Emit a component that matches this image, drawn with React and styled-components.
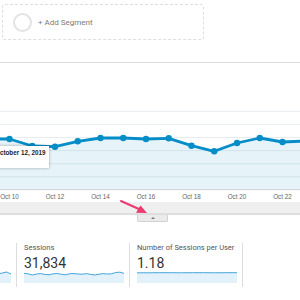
import styled, { createGlobalStyle } from "styled-components";

const GlobalStyle = createGlobalStyle`
  html, body {
    margin: 0;
    padding: 0;
    background: #ffffff;
  }
  body {
    width: 300px;
    height: 300px;
    overflow: hidden;
    font-family: Roboto, "Liberation Sans", Arial, sans-serif;
  }
`;

const Page = styled.div`
  width: 300px;
  height: 300px;
  overflow: hidden;
`;

const Header = styled.div`
  height: 63px;
  padding: 4px 0 0 2px;
  box-sizing: border-box;
  border-bottom: 1px solid #dcdcdc;
`;

const SegmentBox = styled.div`
  width: 202px;
  height: 36px;
  box-sizing: border-box;
  border: 1px dashed #dedede;
  border-radius: 3px;
  display: flex;
  align-items: center;
  padding-left: 10px;
  gap: 6px;
`;

const SegmentCircle = styled.div`
  width: 19px;
  height: 19px;
  box-sizing: border-box;
  border: 2px solid #e3e3e3;
  border-radius: 50%;
`;

const SegmentText = styled.span`
  font-size: 8px;
  color: #7a7a7a;
`;

const ChartWrap = styled.div`
  position: relative;
  height: 139px;
`;

const Tooltip = styled.div`
  position: absolute;
  left: -10px;
  top: 83px;
  width: 59px;
  height: 22px;
  box-sizing: border-box;
  padding: 3px 0 0 5px;
  background: #ffffff;
  box-shadow: 0 0 3px rgba(0, 0, 0, 0.3);
  font-family: "Liberation Sans", Arial, sans-serif;
  font-weight: bold;
  font-size: 6.3px;
  line-height: 8px;
  color: #222;
  white-space: nowrap;
`;

const Scroller = styled.div`
  position: relative;
`;

const Band = styled.div`
  height: 11px;
  background: #efefef;
  border-bottom: 2px solid #dedede;
`;

const Handle = styled.div`
  margin-left: 137px;
  width: 29px;
  height: 6px;
  background: #ebebeb;
  border: 1px solid #d2d2d2;
  border-top: none;
  border-radius: 0 0 2px 2px;
  display: flex;
  align-items: center;
  justify-content: center;
`;

const Caret = styled.div`
  width: 0;
  height: 0;
  border-left: 2px solid transparent;
  border-right: 2px solid transparent;
  border-bottom: 2px solid #777;
`;

const Arrow = styled.svg`
  position: absolute;
  left: 118px;
  top: -3px;
`;

const MetricsRow = styled.div`
  display: flex;
  margin-top: 21px;
  margin-left: -96px;
`;

const Metric = styled.div`
  width: 113px;
  height: 44px;
  flex-shrink: 0;
  box-sizing: border-box;
  border-right: 1px solid #dddddd;
  padding: 0 5px 0 7px;
`;

const MetricLabel = styled.div`
  font-size: 7.5px;
  line-height: 10px;
  height: 10px;
  color: #555;
  white-space: nowrap;
`;

const MetricValue = styled.div`
  margin-top: 2px;
  font-size: 14px;
  line-height: 16px;
  color: #333;
  height: 16px;
`;

const Spark = styled.svg`
  display: block;
`;

const days = [
  [-1, 140], [0, 140], [1, 147], [2, 147.7], [3, 142.3], [4, 139], [5, 139],
  [6, 140], [7, 139.3], [8, 146.7], [9, 152.3], [10, 144], [11, 139],
  [12, 143], [13, 142],
];
const dx = (i) => 9.5 + 22.75 * i;
const pts = days.map(([i, y]) => [dx(i), y]);
const linePath = pts.map(([x, y], k) => `${k ? "L" : "M"}${x} ${y}`).join(" ");
const areaPath = `${linePath} L${pts[pts.length - 1][0]} 190.5 L${pts[0][0]} 190.5 Z`;
const grid = [112.3, 125.4, 138.5, 151.6, 164.7, 177.8];
const labels = ["Oct 10", "Oct 12", "Oct 14", "Oct 16", "Oct 18", "Oct 20", "Oct 22"];

function Sparkline({ values }) {
  const step = 100 / (values.length - 1);
  const line = values.map((v, k) => `${k ? "L" : "M"}${k * step} ${v}`).join(" ");
  return (
    <Spark width="100" height="12" viewBox="0 0 100 12">
      <path d={`${line} L100 12 L0 12 Z`} fill="#e3f1fa" />
      <path d={line} fill="none" stroke="#45a5dc" strokeWidth="1" />
    </Spark>
  );
}

// first card sits mostly off the left edge, only its sparkline tail shows
const metrics = [
  { id: "users", spark: [3, 3, 2.5, 3, 3.5, 3, 2.5, 3, 3.5, 3, 3, 2.5, 3, 3.5, 3, 3, 3, 2.5, 3, 3, 3, 2, 1, 3] },
  { id: "sessions", label: "Sessions", value: "31,834", spark: [2.3, 2.8, 4, 3, 2.6, 3.4, 3.8, 2.8, 2.5, 3.3, 3.8, 2.7, 2.6, 3, 3.2, 2.6, 3.4, 4, 3.2, 2.6, 3, 2.8, 1.5, 1.2, 2.3] },
  { id: "spu", label: "Number of Sessions per User", value: "1.18", spark: [1.8, 1.8, 1.7, 1.7, 1.8, 1.7, 1.7, 1.8, 1.7, 1.7] },
];

export default function App() {
  return (
    <Page>
      <GlobalStyle />
      <Header>
        <SegmentBox>
          <SegmentCircle />
          <SegmentText>+ Add Segment</SegmentText>
        </SegmentBox>
      </Header>
      <ChartWrap>
        <svg width="300" height="139" viewBox="0 64 300 139" style={{ display: "block" }}>
          {grid.map((y) => (
            <line key={y} x1="0" x2="300" y1={y} y2={y} stroke="#ededed" strokeWidth="0.8" />
          ))}
          <path d={areaPath} fill="#058dc7" fillOpacity="0.1" />
          {grid.map((y) => (
            <line key={"g" + y} x1="0" x2="300" y1={y} y2={y} stroke="#058dc7" strokeOpacity="0.06" strokeWidth="0.8" />
          ))}
          <line x1="0" x2="300" y1="190.7" y2="190.7" stroke="#cfcfcf" strokeWidth="1" />
          <path d={linePath} fill="none" stroke="#058dc7" strokeWidth="2.8" strokeLinejoin="round" />
          {pts.map(([x, y]) => (
            <circle key={x} cx={x} cy={y} r="3.2" fill="#058dc7" />
          ))}
          {labels.map((t, k) => (
            <text
              key={t}
              x={dx(k * 2)}
              y="199.5"
              textAnchor="middle"
              fontFamily="'Liberation Sans', Arial, sans-serif"
              fontSize="6.3"
              fill="#666"
            >
              {t}
            </text>
          ))}
        </svg>
        <Tooltip>October 12, 2019</Tooltip>
      </ChartWrap>
      <Scroller>
        <Band />
        <Handle>
          <Caret />
        </Handle>
        <Arrow width="34" height="20" viewBox="0 0 34 20">
          <path d="M3 2 L22 10.5" stroke="#ea3a70" strokeWidth="2" strokeLinecap="round" />
          <path d="M29 14 L18 13.8 L22.5 6.5 Z" fill="#ea3a70" />
        </Arrow>
      </Scroller>
      <MetricsRow>
        {metrics.map((m) => (
          <Metric key={m.id}>
            <MetricLabel>{m.label}</MetricLabel>
            <MetricValue>{m.value}</MetricValue>
            <Sparkline values={m.spark} />
          </Metric>
        ))}
      </MetricsRow>
    </Page>
  );
}
